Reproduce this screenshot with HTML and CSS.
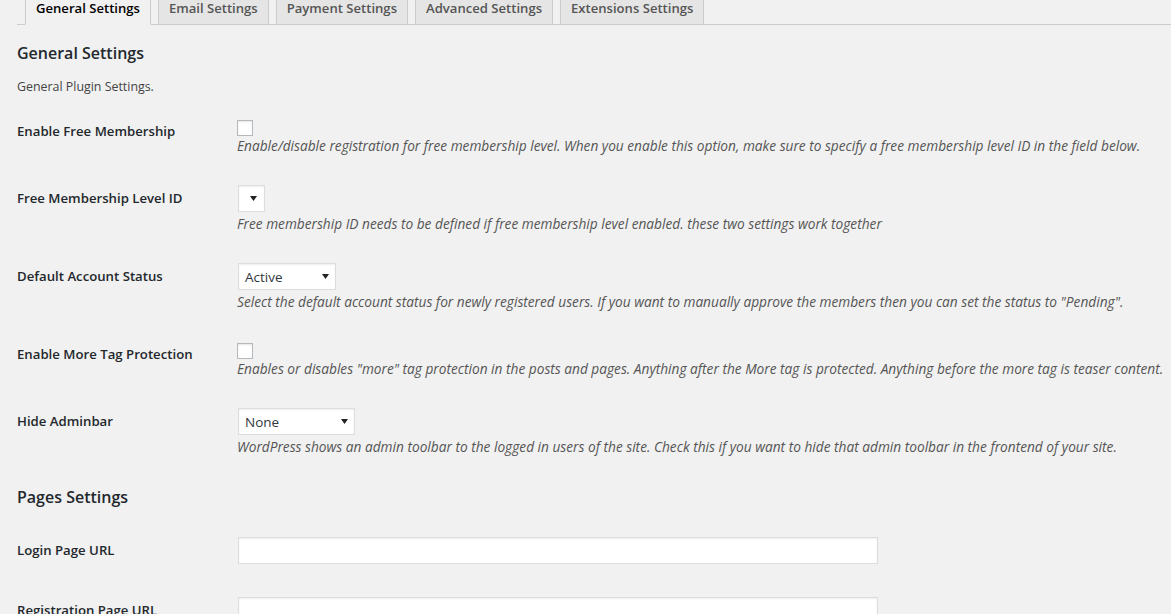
FILE: index.html
```html
<!DOCTYPE html>
<html lang="en">
<head>
<meta charset="utf-8">
<title>General Settings</title>
<link rel="stylesheet" href="styles.css">
</head>
<body>
<div class="wrap">
  <nav class="tabs">
    <a class="tab active">General Settings</a>
    <a class="tab">Email Settings</a>
    <a class="tab">Payment Settings</a>
    <a class="tab">Advanced Settings</a>
    <a class="tab">Extensions Settings</a>
  </nav>

  <h2 class="section-title">General Settings</h2>
  <p class="section-desc">General Plugin Settings.</p>

  <div class="row row-check">
    <div class="label">Enable Free Membership</div>
    <div class="field">
      <span class="checkbox"></span>
      <p class="desc">Enable/disable registration for free membership level. When you enable this option, make sure to specify a free membership level ID in the field below.</p>
    </div>
  </div>

  <div class="row row-select">
    <div class="label">Free Membership Level ID</div>
    <div class="field">
      <div class="select select-empty"><span class="select-text"></span><svg class="arrow" viewBox="0 0 7 5" width="7" height="5"><path d="M0 0h7L3.5 5z"/></svg></div>
      <p class="desc">Free membership ID needs to be defined if free membership level enabled. these two settings work together</p>
    </div>
  </div>

  <div class="row row-select">
    <div class="label">Default Account Status</div>
    <div class="field">
      <div class="select select-status"><span class="select-text">Active</span><svg class="arrow" viewBox="0 0 7 5" width="7" height="5"><path d="M0 0h7L3.5 5z"/></svg></div>
      <p class="desc">Select the default account status for newly registered users. If you want to manually approve the members then you can set the status to "Pending".</p>
    </div>
  </div>

  <div class="row row-check">
    <div class="label">Enable More Tag Protection</div>
    <div class="field">
      <span class="checkbox"></span>
      <p class="desc">Enables or disables "more" tag protection in the posts and pages. Anything after the More tag is protected. Anything before the more tag is teaser content.</p>
    </div>
  </div>

  <div class="row row-select">
    <div class="label">Hide Adminbar</div>
    <div class="field">
      <div class="select select-adminbar"><span class="select-text">None</span><svg class="arrow" viewBox="0 0 7 5" width="7" height="5"><path d="M0 0h7L3.5 5z"/></svg></div>
      <p class="desc">WordPress shows an admin toolbar to the logged in users of the site. Check this if you want to hide that admin toolbar in the frontend of your site.</p>
    </div>
  </div>

  <h2 class="section-title pages-title">Pages Settings</h2>

  <div class="row row-input">
    <div class="label">Login Page URL</div>
    <div class="field"><span class="text-input"></span></div>
  </div>

  <div class="row row-input">
    <div class="label">Registration Page URL</div>
    <div class="field"><span class="text-input"></span></div>
  </div>
</div>
</body>
</html>
```

FILE: styles.css
```css
html, body {
  margin: 0;
  padding: 0;
  background: #f1f1f1;
  overflow: hidden;
}

body {
  font-family: "Open Sans", "Noto Sans", sans-serif;
  color: #23282d;
  font-size: 13px;
}

.wrap {
  padding-left: 17px;
}

.tabs {
  display: flex;
  border-bottom: 1px solid #ccc;
  height: 24px;
  padding-left: 8px;
}

.tab {
  display: block;
  box-sizing: border-box;
  height: 25px;
  padding: 0 10px;
  margin-right: 7px;
  border: 1px solid #ccc;
  border-top: 0;
  background: #e5e5e5;
  color: #555;
  font-size: 13.1px;
  font-weight: 600;
  line-height: 17px;
  white-space: nowrap;
}

.tab.active {
  background: #f1f1f1;
  color: #000;
  border-bottom-color: #f1f1f1;
}

.section-title {
  margin: 16px 0 0;
  font-size: 16px;
  font-weight: 600;
  line-height: 24px;
  color: #23282d;
}

.section-desc {
  margin: 13px 0 7px;
  font-size: 12.4px;
  line-height: 18px;
  color: #444;
}

.row {
  display: grid;
  grid-template-columns: 220px 1fr;
}

.row-check { padding: 17px 0 15px; }
.row-select { padding: 15px 0; }
.row-input { padding: 17px 0 16px; }

.label {
  font-size: 13.2px;
  font-weight: 600;
  line-height: 18px;
  color: #23282d;
  white-space: nowrap;
}

.row-check .label { padding-top: 2px; }
.row-select .label,
.row-input .label { padding-top: 4px; }

.field {
  display: flex;
  flex-direction: column;
  align-items: flex-start;
}

.checkbox {
  display: block;
  box-sizing: border-box;
  width: 16px;
  height: 16px;
  border: 1px solid #b4b9be;
  background: #fff;
  box-shadow: inset 0 1px 2px rgba(0, 0, 0, 0.1);
}

.select {
  box-sizing: border-box;
  height: 27px;
  margin-left: 1px;
  display: flex;
  align-items: center;
  justify-content: space-between;
  padding: 0 6px 0 6px;
  border: 1px solid #ddd;
  background: #fff;
  box-shadow: inset 0 1px 2px rgba(0, 0, 0, 0.07);
  font-size: 13.5px;
  color: #32373c;
}

.select-empty { width: 27px; justify-content: flex-end; padding-right: 7px; }
.select-status { width: 98px; }
.select-adminbar { width: 117px; }

.arrow { fill: #222; flex: none; }

.desc {
  margin: 2px 0 0;
  font-size: 13.7px;
  font-style: italic;
  line-height: 18px;
  color: #555;
  white-space: nowrap;
}

.row-check .desc { margin-top: 1px; }
.row-select .desc { margin-top: 3px; }

.pages-title {
  margin: 14px 0 11px;
}

.text-input {
  display: block;
  box-sizing: border-box;
  width: 640px;
  height: 27px;
  margin-left: 1px;
  border: 1px solid #ddd;
  background: #fff;
  box-shadow: inset 0 1px 2px rgba(0, 0, 0, 0.07);
}
```
